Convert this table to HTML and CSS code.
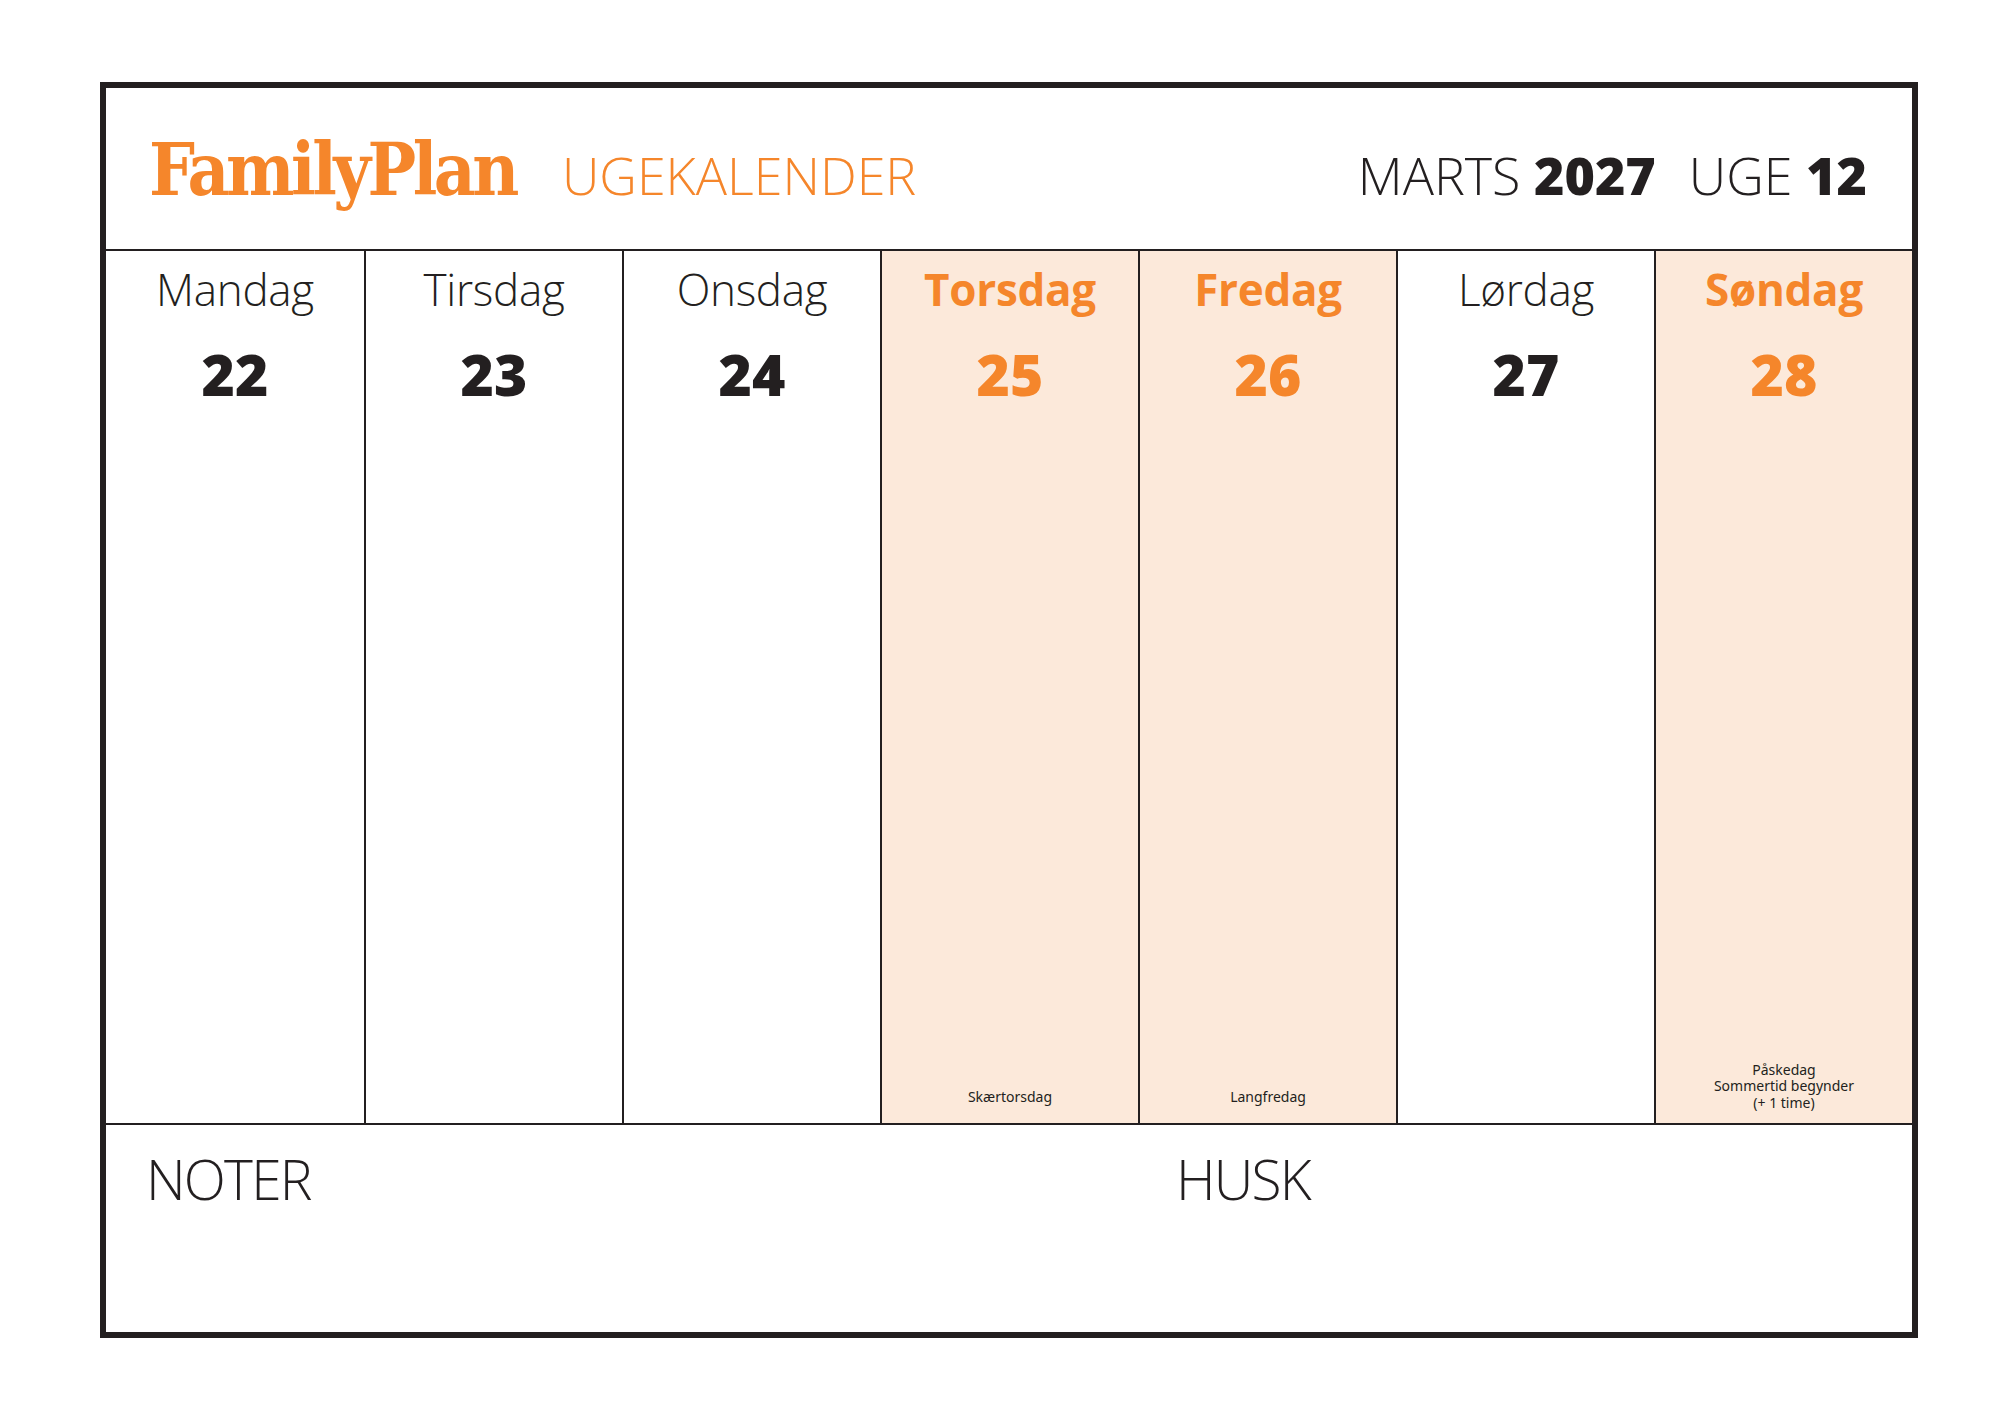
FILE: index.html
```html
<!DOCTYPE html>
<html lang="da">
<head>
<meta charset="utf-8">
<title>FamilyPlan Ugekalender</title>
<link rel="stylesheet" href="styles.css">
</head>
<body>
<div class="sheet">
  <header class="head">
    <div class="brand">
      <span class="logo">FamilyPlan</span>
      <span class="title">UGEKALENDER</span>
    </div>
    <div class="period">
      <span class="thin">MARTS</span> <b>2027</b><span class="sp"></span><span class="thin">UGE</span> <b>12</b>
    </div>
  </header>
  <section class="week">
    <div class="day"><div class="name">Mandag</div><div class="num">22</div><div class="event"></div></div>
    <div class="day"><div class="name">Tirsdag</div><div class="num">23</div><div class="event"></div></div>
    <div class="day"><div class="name">Onsdag</div><div class="num">24</div><div class="event"></div></div>
    <div class="day holiday"><div class="name">Torsdag</div><div class="num">25</div><div class="event">Skærtorsdag</div></div>
    <div class="day holiday"><div class="name">Fredag</div><div class="num">26</div><div class="event">Langfredag</div></div>
    <div class="day"><div class="name">Lørdag</div><div class="num">27</div><div class="event"></div></div>
    <div class="day holiday"><div class="name">Søndag</div><div class="num">28</div><div class="event event-multi">Påskedag<br>Sommertid begynder<br>(+ 1 time)</div></div>
  </section>
  <section class="notes">
    <div class="note note-left">NOTER</div>
    <div class="note note-right">HUSK</div>
  </section>
</div>
</body>
</html>
```

FILE: styles.css
```css
* { box-sizing: border-box; }

html, body {
  margin: 0;
  padding: 0;
  background: #ffffff;
}

body {
  font-family: "Open Sans", "Noto Sans", "Liberation Sans", sans-serif;
  color: #231f20;
  padding: 82px 0 0 100px;
}

.sheet {
  width: 1818px;
  height: 1256px;
  border: 6px solid #231f20;
  display: flex;
  flex-direction: column;
}

/* Header */
.head {
  height: 163px;
  border-bottom: 2px solid #231f20;
  display: flex;
  justify-content: space-between;
  align-items: baseline;
  padding: 42px 45px 0 43px;
}

.brand {
  display: flex;
  align-items: baseline;
  gap: 46px;
}

.logo {
  font-family: "DejaVu Serif", "Liberation Serif", serif;
  font-weight: 700;
  font-stretch: condensed;
  font-size: 72px;
  line-height: 80px;
  color: #f5862b;
  letter-spacing: -3.5px;
}

.title {
  font-weight: 300;
  font-size: 52px;
  line-height: 80px;
  color: #f5862b;
}

.period {
  font-size: 52px;
  line-height: 80px;
  color: #231f20;
}

.period .thin { font-weight: 300; }
.period b { font-weight: 800; }
.period .sp { display: inline-block; width: 33px; }

/* Week */
.week {
  height: 874px;
  border-bottom: 2px solid #231f20;
  display: grid;
  grid-template-columns: repeat(7, 1fr);
}

.day {
  display: flex;
  flex-direction: column;
  align-items: center;
  text-align: center;
  padding-top: 12px;
}

.day + .day { border-left: 2px solid #231f20; }

.holiday { background: #fce9da; }

.name {
  font-size: 44px;
  font-weight: 300;
  line-height: 52px;
  letter-spacing: -0.3px;
}

.num {
  margin-top: 29px;
  font-size: 57px;
  font-weight: 800;
  line-height: 60px;
}

.holiday .name,
.holiday .num { color: #f5862b; }

.holiday .name { font-weight: 700; }

.event {
  margin-top: auto;
  padding-bottom: 18px;
  font-family: "Noto Sans", "Open Sans", sans-serif;
  font-size: 14px;
  line-height: 16.5px;
  color: #231f20;
}

.event-multi { padding-bottom: 12px; }

/* Notes */
.notes {
  flex: 1;
  display: grid;
  grid-template-columns: 1030px 1fr;
}

.note {
  padding: 24px 0 0 40px;
  font-size: 55px;
  font-weight: 300;
  line-height: 60px;
  letter-spacing: -1.8px;
}
```
